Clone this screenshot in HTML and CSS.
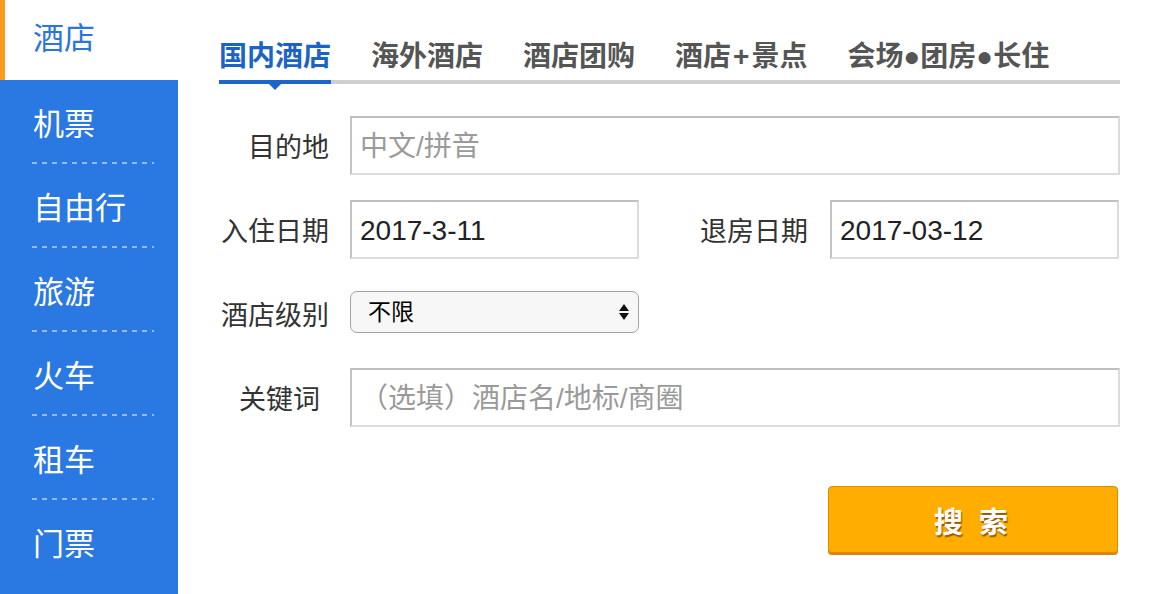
FILE: index.html
```html
<!DOCTYPE html>
<html lang="zh-CN">
<head>
<meta charset="utf-8">
<title>酒店搜索</title>
<link rel="stylesheet" href="styles.css">
</head>
<body>
<div class="page">
  <nav class="side">
    <div class="side-item active">酒店</div>
    <ul class="side-list">
      <li class="side-item">机票</li>
      <li class="side-item">自由行</li>
      <li class="side-item">旅游</li>
      <li class="side-item">火车</li>
      <li class="side-item">租车</li>
      <li class="side-item last">门票</li>
    </ul>
  </nav>
  <main class="main">
    <div class="tabs">
      <span class="tab active">国内酒店</span>
      <span class="tab">海外酒店</span>
      <span class="tab">酒店团购</span>
      <span class="tab">酒店<span class="plus">+</span>景点</span>
      <span class="tab">会场●团房●长住</span>
    </div>
    <form class="form">
      <div class="row">
        <label class="label">目的地</label>
        <input class="field wide" type="text" placeholder="中文/拼音">
      </div>
      <div class="row">
        <label class="label">入住日期</label>
        <input class="field half" type="text" value="2017-3-11">
        <label class="label second">退房日期</label>
        <input class="field half" type="text" value="2017-03-12">
      </div>
      <div class="row">
        <label class="label">酒店级别</label>
        <div class="select-wrap">
          <select class="select">
            <option>不限</option>
          </select>
          <svg class="select-arrows" width="12" height="18" viewBox="0 0 12 18"><path d="M6 1 L11 8 L1 8 Z M1 10 L11 10 L6 17 Z" fill="#111"/></svg>
        </div>
      </div>
      <div class="row">
        <label class="label kw">关键词</label>
        <input class="field wide" type="text" placeholder="（选填）酒店名/地标/商圈">
      </div>
      <div class="actions">
        <button class="btn" type="button">搜 索</button>
      </div>
    </form>
  </main>
</div>
</body>
</html>
```

FILE: styles.css
```css
html, body {
  margin: 0;
  padding: 0;
  background: #fff;
}
body {
  font-family: "Liberation Sans", "Noto Sans CJK SC", sans-serif;
  width: 1160px;
  height: 594px;
  overflow: hidden;
}
.page {
  display: flex;
  height: 594px;
}
.side {
  width: 178px;
  flex: none;
  display: flex;
  flex-direction: column;
}
.side-item {
  font-size: 31px;
  padding-left: 33px;
  box-sizing: border-box;
  display: flex;
  align-items: center;
}
.side-item.active {
  height: 80px;
  color: #2a76dc;
  border-left: 5px solid #f99b1c;
  padding-left: 28px;
  padding-bottom: 9px;
}
.side-list {
  list-style: none;
  margin: 0;
  padding: 0;
  flex: 1;
  background: #2a78e2;
}
.side-list .side-item {
  height: 84px;
  color: #fff;
  position: relative;
  padding-bottom: 2px;
}
.side-list .side-item::after {
  content: "";
  position: absolute;
  left: 32px;
  width: 122px;
  bottom: 0;
  height: 2px;
  background: repeating-linear-gradient(to right, rgba(255,255,255,0.5) 0 5px, transparent 5px 10px);
}
.side-list .side-item.last::after {
  display: none;
}
.main {
  padding-left: 41px;
  padding-top: 42px;
  width: 901px;
}
.tabs {
  display: flex;
  gap: 40px;
  border-bottom: 4px solid #cfcfcf;
}
.tab {
  font-size: 28px;
  font-weight: bold;
  line-height: 30px;
  padding-bottom: 8px;
  color: #555;
  position: relative;
}
.plus {
  margin: 0 2px;
}
.tab.active {
  color: #1c63c6;
}
.tab.active::after {
  content: "";
  position: absolute;
  left: 0;
  right: 0;
  bottom: -4px;
  height: 4px;
  background: #1a66cc;
}
.tab.active::before {
  content: "";
  position: absolute;
  left: 50%;
  margin-left: -6px;
  bottom: -10px;
  border-left: 6px solid transparent;
  border-right: 6px solid transparent;
  border-top: 6px solid #1a66cc;
}
.form {
  padding-top: 32px;
  display: flex;
  flex-direction: column;
  gap: 25px;
}
.row {
  display: flex;
  align-items: center;
  height: 59px;
}
.label {
  width: 110px;
  flex: none;
  text-align: right;
  font-size: 27px;
  color: #333;
  margin-right: 21px;
  box-sizing: border-box;
}
.label.kw {
  padding-right: 9px;
}
.label.second {
  margin-left: 59px;
  margin-right: 22px;
}
.field {
  height: 59px;
  box-sizing: border-box;
  border: 2px solid;
  border-color: #bfbfbf #dcdcdc #dcdcdc #c4c4c4;
  padding: 2px 8px 0;
  font-family: "Liberation Sans", "Noto Sans CJK SC", sans-serif;
  font-size: 28px;
  color: #222;
  background: #fff;
  outline: none;
}
.field::placeholder {
  color: #9a9a9a;
}
.field.wide {
  flex: 1;
  margin-right: 0;
}
.field.half {
  width: 289px;
}
.select-wrap {
  position: relative;
  width: 289px;
  height: 42px;
  margin-top: -3px;
}
.select {
  appearance: none;
  -webkit-appearance: none;
  width: 100%;
  height: 42px;
  box-sizing: border-box;
  border: 1px solid #a3a3a3;
  border-radius: 7px;
  background: #f7f7f7;
  padding: 0 0 0 17px;
  font-family: "Liberation Sans", "Noto Sans CJK SC", sans-serif;
  font-size: 23px;
  color: #000;
  outline: none;
}
.select-arrows {
  position: absolute;
  right: 9px;
  top: 12px;
  pointer-events: none;
}
.actions {
  display: flex;
  justify-content: flex-end;
  padding-top: 34px;
  padding-right: 2px;
}
.btn {
  width: 290px;
  height: 67px;
  box-sizing: border-box;
  background: #ffae00;
  border: 1px solid #e48800;
  border-radius: 4px;
  box-shadow: 0 2px 0 #d9801a;
  color: #fff;
  font-family: "Liberation Sans", "Noto Sans CJK SC", sans-serif;
  font-size: 29px;
  font-weight: bold;
  letter-spacing: 4px;
  text-shadow: 1px 2px 1px rgba(120, 60, 0, 0.75);
  cursor: pointer;
}
```
